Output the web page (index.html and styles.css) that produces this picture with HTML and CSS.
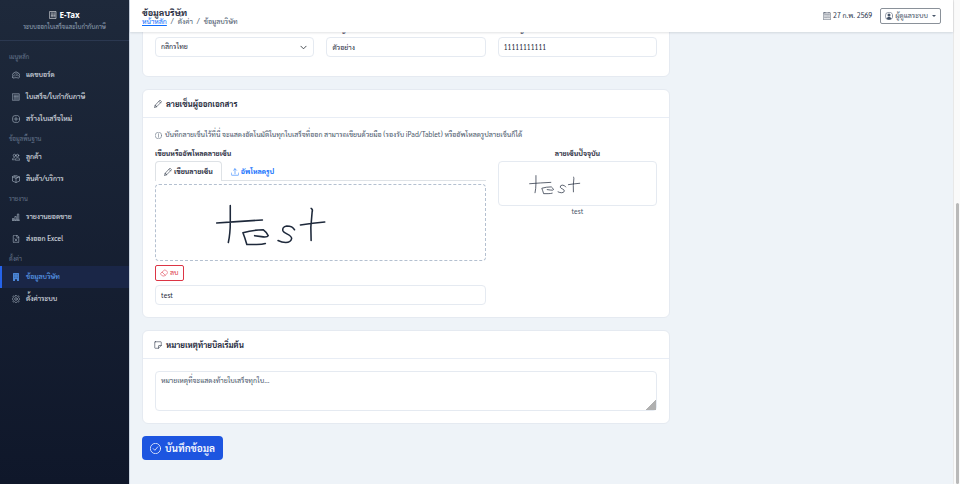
FILE: index.html
```html
<!DOCTYPE html>
<html lang="th">
  <head>
    <meta charset="UTF-8" />
    <meta name="viewport" content="width=device-width, initial-scale=1.0" />
    <title>ข้อมูลบริษัท | E-Tax</title>
    <link rel="stylesheet" href="styles.css">
  </head>
  <body>
    <div class="app">
      <aside class="sidebar">
        <div class="brand">
          <div class="brand-name">
            <svg class="icon" viewBox="0 0 16 16"><path d="M2 1h12v14H2zM4.500 4h4M4.500 6.500h4M4.500 9h4M4.500 11.500h4M10.500 4h1.500M10.500 6.500h1.500M10.500 9h1.500M10.500 11.500h1.500" /></svg>
            E-Tax
          </div>
          <div class="brand-sub">ระบบออกใบเสร็จและใบกำกับภาษี</div>
        </div>
        <nav class="menu">
          <div class="menu-label">เมนูหลัก</div>
          <a class="menu-item" href="#">
            <svg class="icon" viewBox="0 0 16 16"><path d="M1.700 13.500a7.500 7.500 0 1 1 12.600 0c-.5.700-1.200.800-2 .500-2.700-1-5.900-1-8.600 0-.8.300-1.500.2-2-.5zM8 4v1.500M3 9.500h1.500M11.500 9.500h1.500M4.500 6l.8.800M7.500 10l4-4.500" /></svg>
            แดชบอร์ด
          </a>
          <a class="menu-item" href="#">
            <svg class="icon" viewBox="0 0 16 16"><path d="M1.500 1.500h13v13h-13zM4 4.500h5M4 7h5M4 9.500h5M4 12h5M11 4.500h1.500M11 7h1.500M11 9.500h1.500M11 12h1.500" /></svg>
            ใบเสร็จ/ใบกำกับภาษี
          </a>
          <a class="menu-item" href="#">
            <svg class="icon" viewBox="0 0 16 16"><circle cx="8" cy="8" r="7.500" /><path d="M8 4v8M4 8h8" /></svg>
            สร้างใบเสร็จใหม่
          </a>
          <div class="menu-label">ข้อมูลพื้นฐาน</div>
          <a class="menu-item" href="#">
            <svg class="icon" viewBox="0 0 16 16"><circle cx="11" cy="5" r="2.500" /><circle cx="5" cy="5" r="2.500" /><path d="M6.500 13.500c0-2.500 1.800-4 4.500-4s4.500 1.500 4.500 4zM4.500 13.500h-4c0-2.500 1.500-4 4.500-4" /></svg>
            ลูกค้า
          </a>
          <a class="menu-item" href="#">
            <svg class="icon" viewBox="0 0 16 16"><path d="M8 1l7 2.800v8.400L8 15l-7-2.800V3.800zM1 3.800l7 2.800 7-2.800M8 6.600V15M4.500 2.400l7 2.800" /></svg>
            สินค้า/บริการ
          </a>
          <div class="menu-label">รายงาน</div>
          <a class="menu-item" href="#">
            <svg class="icon" viewBox="0 0 16 16"><path d="M1.500 11h2v3.500h-2zM6.500 7h2v7.500h-2zM11.500 2h2v12.500h-2zM0 14.500h16" /></svg>
            รายงานยอดขาย
          </a>
          <a class="menu-item" href="#">
            <svg class="icon" viewBox="0 0 16 16"><path d="M9.500.5H4a1.500 1.500 0 0 0-1.500 1.500v12A1.500 1.500 0 0 0 4 15.500h8a1.500 1.500 0 0 0 1.500-1.500V4.500zM9.500.5v4h4M6 7.500l4 5M10 7.500l-4 5" /></svg>
            ส่งออก Excel
          </a>
          <div class="menu-label">ตั้งค่า</div>
          <a class="menu-item active" href="#" aria-current="page">
            <svg class="icon" viewBox="0 0 16 16"><path class="solid" fill-rule="evenodd" d="M3 0h10a1 1 0 0 1 1 1v14a1 1 0 0 1-1 1h-3v-3.500H6V16H3a1 1 0 0 1-1-1V1a1 1 0 0 1 1-1zM4.500 2.500v1h1v-1zM7.500 2.500v1h1v-1zM10.500 2.500v1h1v-1zM4.500 5.500v1h1v-1zM7.500 5.500v1h1v-1zM10.500 5.500v1h1v-1zM4.500 8.500v1h1v-1zM7.500 8.500v1h1v-1zM10.500 8.500v1h1v-1z" /></svg>
            ข้อมูลบริษัท
          </a>
          <a class="menu-item" href="#">
            <svg class="icon" viewBox="0 0 16 16"><circle cx="8" cy="8" r="2.700" /><path d="M6.800 1.200a1.300 1.300 0 0 1 2.400 0l.4 1 1.200.5 1-.4a1.300 1.300 0 0 1 1.900 1.900l-.4 1 .5 1.200 1 .4a1.300 1.300 0 0 1 0 2.400l-1 .4-.5 1.200.4 1a1.300 1.300 0 0 1-1.900 1.900l-1-.4-1.200.5-.4 1a1.300 1.300 0 0 1-2.400 0l-.4-1-1.200-.5-1 .4a1.300 1.300 0 0 1-1.900-1.900l.4-1-.5-1.200-1-.4a1.300 1.300 0 0 1 0-2.400l1-.4.5-1.200-.4-1a1.300 1.300 0 0 1 1.900-1.900l1 .4 1.200-.5z" /></svg>
            ตั้งค่าระบบ
          </a>
        </nav>
      </aside>

      <main class="main">
        <header class="topbar">
          <div>
            <h1>ข้อมูลบริษัท</h1>
            <nav class="breadcrumb">
              <a href="#">หน้าหลัก</a><span>/</span><span>ตั้งค่า</span><span>/</span><span>ข้อมูลบริษัท</span>
            </nav>
          </div>
          <div class="topbar-right">
            <span class="today">
              <svg class="icon" viewBox="0 0 16 16"><path d="M2 1.500h12A1.500 1.500 0 0 1 15.500 3v11a1.500 1.500 0 0 1-1.500 1.500H2A1.500 1.500 0 0 1 .5 14V3A1.500 1.500 0 0 1 2 1.500zM4 0v1.500M12 0v1.500M3 4.500h10M7 8h6M3 8h2M3 11.500h6M11 11.500h2" /></svg>
              27 ก.พ. 2569
            </span>
            <button type="button" class="user-btn">
              <svg class="icon" viewBox="0 0 16 16"><circle cx="8" cy="8" r="7.500" /><circle cx="8" cy="6" r="3" class="solid" /><path class="solid" d="M3 13c1-2 2.500-3 5-3s4 1 5 3a7 7 0 0 1-10 0z" /></svg>
              ผู้ดูแลระบบ
              <span class="caret"></span>
            </button>
          </div>
        </header>

        <!-- reversed column: the view opens at the end of the form -->
        <div class="content">
          <form class="form">
            <section class="card">
              <div class="card-body bank">
                <div>
                  <label for="bank">ธนาคาร</label>
                  <select id="bank" class="field">
                    <option>กสิกรไทย</option>
                  </select>
                </div>
                <div>
                  <label for="accName">ชื่อบัญชี</label>
                  <input id="accName" class="field" type="text" value="ตัวอย่าง" />
                </div>
                <div>
                  <label for="accNo">เลขที่บัญชี</label>
                  <input id="accNo" class="field" type="text" value="11111111111" />
                </div>
              </div>
            </section>

            <section class="card">
              <h2 class="card-header">
                <svg class="icon" viewBox="0 0 16 16"><path d="M12.500.8l2.700 2.700L5 13.700.9 15.100 2.300 11zM10.300 3l2.700 2.700M2.300 11l1.200.3.200 1 1 .2.300 1.200" /></svg>
                ลายเซ็นผู้ออกเอกสาร
              </h2>
              <div class="card-body">
                <p class="hint">
                  <svg class="icon" viewBox="0 0 16 16"><circle cx="8" cy="8" r="7.500" /><path d="M8 7v5M8 4v1.500" /></svg>
                  บันทึกลายเซ็นไว้ที่นี่ จะแสดงอัตโนมัติในทุกใบเสร็จที่ออก สามารถเขียนด้วยมือ (รองรับ iPad/Tablet) หรืออัพโหลดรูปลายเซ็นก็ได้
                </p>
                <div class="columns">
                  <div class="wide">
                    <label for="signName">เขียนหรืออัพโหลดลายเซ็น</label>
                    <div class="tabs">
                      <button type="button" class="tab active">
                        <svg class="icon" viewBox="0 0 16 16"><path d="M12.500.8l2.700 2.700L5 13.700.9 15.100 2.300 11zM10.300 3l2.700 2.700M2.300 11l1.200.3.200 1 1 .2.300 1.200" /></svg>
                        เขียนลายเซ็น
                      </button>
                      <button type="button" class="tab">
                        <svg class="icon" viewBox="0 0 16 16"><path d="M.5 10v3a1.500 1.500 0 0 0 1.500 1.500h12a1.500 1.500 0 0 0 1.500-1.500v-3M8 11.500V1.500M5 4.500l3-3 3 3" /></svg>
                        อัพโหลดรูป
                      </button>
                    </div>
                    <div class="pad">
                      <svg class="signature" viewBox="0 0 331 77" role="img" aria-label="ลายเซ็น">
                        <g id="strokes">
                          <path d="M73 21L73 38Q73 50 71 59M59 39Q84 37 106 36" />
                          <path d="M109 60Q106 61 100 61H90Q88 54 86 49Q96 46 107 46Q111 49 112 52Q111 54 105 53L98 52" />
                          <path d="M139 46Q137 42 131 42Q126 43 127 47C128 50 136 51 136 55Q135 59 130 59Q126 59 122 57" />
                          <path d="M156 24Q158 25 157 28Q155 43 156 57M145 41Q158 39 170 38" />
                        </g>
                      </svg>
                    </div>
                    <button type="button" class="clear-btn">
                      <svg class="icon" viewBox="0 0 16 16"><path d="M9 2a1.500 1.500 0 0 1 2 0l4 4a1.500 1.500 0 0 1 0 2l-6 6H5L1.500 10.500a1.500 1.500 0 0 1 0-2zM4.500 6.500l6 6" /></svg>
                      ลบ
                    </button>
                    <input id="signName" class="field" type="text" value="test" />
                  </div>
                  <div class="current">
                    <div class="label">ลายเซ็นปัจจุบัน</div>
                    <div class="preview">
                      <svg class="signature" viewBox="0 0 331 77" role="img" aria-label="ลายเซ็นปัจจุบัน"><use href="#strokes" /></svg>
                    </div>
                    <div class="signer">test</div>
                  </div>
                </div>
              </div>
            </section>

            <section class="card">
              <h2 class="card-header">
                <svg class="icon" viewBox="0 0 16 16"><path d="M2.500 1.500h11A1 1 0 0 1 14.500 2.500V9L9 14.500H2.500a1 1 0 0 1-1-1v-11a1 1 0 0 1 1-1zM9 14.500V10a1 1 0 0 1 1-1h4.500" /></svg>
                หมายเหตุท้ายบิลเริ่มต้น
              </h2>
              <div class="card-body">
                <textarea class="field note" aria-label="หมายเหตุท้ายบิลเริ่มต้น" placeholder="หมายเหตุที่จะแสดงท้ายใบเสร็จทุกใบ..."></textarea>
              </div>
            </section>

            <button type="submit" class="save-btn">
              <svg class="icon" viewBox="0 0 16 16"><circle cx="8" cy="8" r="7.500" /><path d="M4.700 8.200l2.400 2.400 4.200-5" /></svg>
              บันทึกข้อมูล
            </button>
          </form>
        </div>
      </main>

      <div class="scroll-track"><div class="scroll-thumb"></div></div>
    </div>
  </body>
</html>
```
FILE: styles.css
```css
* {
  box-sizing: border-box;
}

body {
  margin: 0;
  background: #eef3f8;
  color: #1e293b;
  font-family: Sarabun, "Noto Sans Thai Looped", "Noto Looped Thai", Loma, Garuda, Waree, "Noto Sans", sans-serif;
  font-size: 7px;
  line-height: 12px;
}

button,
input,
select,
textarea {
  font: inherit;
  color: inherit;
}

button {
  display: inline-flex;
  align-items: center;
  cursor: pointer;
}

.icon {
  flex: none;
  width: 8px;
  height: 8px;
  fill: none;
  stroke: currentColor;
  stroke-width: 1.1;
  stroke-linecap: round;
  stroke-linejoin: round;
}

.icon .solid {
  fill: currentColor;
  stroke: none;
}

.app {
  display: flex;
  height: 100vh;
}

/* Sidebar */
.sidebar {
  flex: none;
  width: 130px;
  background: linear-gradient(#1e293b, #0f172a);
  border-right: 1px solid #cbd5e1;
  color: #cbd5e1;
}

.brand {
  padding: 9px 0 7px;
  border-bottom: 1px solid #2b3850;
  text-align: center;
}

.brand-name {
  display: flex;
  align-items: center;
  justify-content: center;
  gap: 2px;
  color: #fff;
  font-family: "Noto Sans", sans-serif;
  font-size: 8px;
  font-weight: 700;
}

.brand-sub {
  color: #94a3b8;
  font-size: 6px;
}

.menu {
  padding-top: 7px;
}

.menu-label {
  padding: 3px 9px 1px;
  color: #64748b;
  font-size: 6px;
}

.menu-item {
  display: flex;
  align-items: center;
  gap: 6px;
  height: 22px;
  padding-left: 10px;
  border-left: 2px solid transparent;
  color: #e2e8f0;
  text-decoration: none;
}

.menu-item .icon {
  color: #b6c2d1;
}

.menu-item.active {
  background: #1a2647;
  border-left-color: #2563eb;
  color: #60a5fa;
}

.menu-item.active .icon {
  color: #4b86d8;
}

/* Top bar */
.main {
  flex: 1;
  display: flex;
  flex-direction: column;
  min-width: 0;
}

.topbar {
  z-index: 1;
  flex: none;
  display: flex;
  align-items: center;
  justify-content: space-between;
  height: 32px;
  padding: 0 12px;
  background: #fff;
  box-shadow: 0 1px 2px rgba(15, 23, 42, 0.12);
}

h1 {
  margin: 0;
  padding-top: 1px;
  font-size: 9px;
  font-weight: 700;
  line-height: 10px;
}

.breadcrumb {
  display: flex;
  gap: 4px;
  color: #475569;
  line-height: 10px;
}

.breadcrumb a {
  color: #0d6efd;
}

.topbar-right,
.today {
  display: flex;
  align-items: center;
  gap: 8px;
}

.today {
  gap: 2px;
  color: #334155;
}

.user-btn {
  gap: 2px;
  height: 16px;
  padding: 0 4px;
  background: #fff;
  border: 1px solid #8a9199;
  border-radius: 2px;
  color: #475569;
}

.caret {
  margin-left: 2px;
  border: 2px solid transparent;
  border-top-color: currentColor;
  border-bottom: 0;
}

/* Form */
.content {
  flex: 1;
  display: flex;
  flex-direction: column-reverse;
  min-height: 0;
  overflow-y: auto;
  scrollbar-width: none;
  padding: 0 12px;
}

.form {
  flex: none;
  width: 66.1%;
  padding-bottom: 24px;
}

.card {
  margin-bottom: 12px;
  background: #fff;
  border: 1px solid #e5eaf1;
  border-radius: 6px;
}

.card-header {
  display: flex;
  align-items: center;
  gap: 4px;
  height: 28px;
  margin: 0;
  padding: 0 11px;
  border-bottom: 1px solid #e8edf5;
  font-size: 8px;
  font-weight: 700;
}

.card-body {
  padding: 12px;
}

.bank,
.columns {
  display: grid;
  grid-template-columns: repeat(3, 1fr);
  gap: 12px;
}

.bank {
  padding-bottom: 19px;
}

.wide {
  grid-column: span 2;
}

label,
.label {
  display: block;
  height: 13px;
  font-weight: 700;
}

.field {
  display: block;
  width: 100%;
  height: 20px;
  padding: 0 5px;
  background: #fff;
  border: 1px solid #e5eaf1;
  border-radius: 4px;
}

select.field {
  appearance: none;
  background: #fff url("data:image/svg+xml,%3Csvg xmlns='http://www.w3.org/2000/svg' viewBox='0 0 16 16'%3E%3Cpath fill='none' stroke='%23343a40' stroke-width='2' stroke-linecap='round' stroke-linejoin='round' d='m2 5 6 6 6-6'/%3E%3C/svg%3E") no-repeat right 6px center / 7px;
}

.hint {
  display: flex;
  align-items: center;
  gap: 3px;
  margin: 0 0 8px;
  color: #475569;
  line-height: 10px;
  white-space: nowrap;
}

.hint .icon {
  width: 7px;
  height: 7px;
}

.tabs {
  display: flex;
  height: 20px;
  margin-bottom: 3px;
  border-bottom: 1px solid #dee2e6;
}

.tab {
  gap: 2px;
  height: 20px;
  padding: 0 8px;
  background: none;
  border: 1px solid transparent;
  border-bottom: 0;
  border-radius: 4px 4px 0 0;
  color: #0d6efd;
  font-weight: 700;
}

.tab.active {
  background: #fff;
  border-color: #dee2e6;
  color: #1e293b;
}

.pad {
  height: 77px;
  border: 1px dashed #b4c0d0;
  border-radius: 4px;
}

.signature {
  display: block;
  width: 100%;
  height: 100%;
  fill: none;
  stroke: #1e293b;
  stroke-width: 1.6;
  stroke-linecap: round;
  stroke-linejoin: round;
}

.clear-btn {
  gap: 2px;
  height: 16px;
  margin: 4px 0;
  padding: 0 4px;
  background: #fff;
  border: 1px solid #dc3545;
  border-radius: 2px;
  color: #dc3545;
}

.current {
  text-align: center;
}

.preview {
  height: 45px;
  padding: 4px;
  border: 1px solid #e5eaf1;
  border-radius: 4px;
}

.signer {
  color: #475569;
}

.note {
  height: 40px;
  padding: 3px 5px;
}

.note::placeholder {
  color: #475569;
}

.note::-webkit-resizer {
  background: linear-gradient(135deg, transparent 65%, #b0b0b0 65%);
}

.save-btn {
  gap: 4px;
  height: 24px;
  padding: 0 8px;
  background: #1d55e0;
  border: 0;
  border-radius: 4px;
  color: #fff;
  font-size: 10px;
  font-weight: 600;
}

.save-btn .icon {
  width: 11px;
  height: 11px;
}

/* Page scroll bar */
.scroll-track {
  flex: none;
  display: flex;
  flex-direction: column;
  justify-content: flex-end;
  width: 7px;
  padding: 0 1px 0 2px;
  background: #fafafa;
  border-left: 1px solid #e8e8e8;
}

.scroll-thumb {
  height: 58%;
  background: #b9b9b9;
  border-radius: 2px;
}
```
